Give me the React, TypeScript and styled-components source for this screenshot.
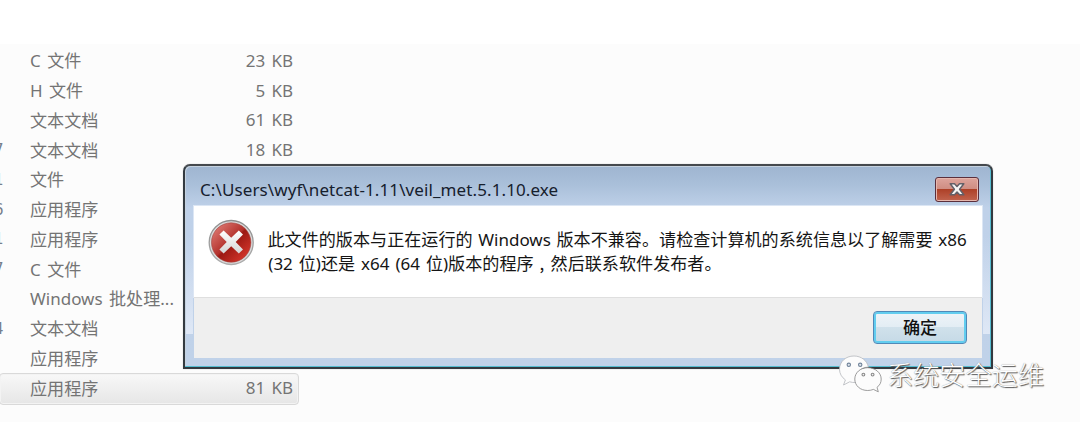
import React from 'react';
import styled, { createGlobalStyle } from 'styled-components';

const GlobalStyle = createGlobalStyle`
  * { box-sizing: border-box; }
  body { margin: 0; background: #fff; font-family: "Noto Sans", "Noto Sans CJK SC", sans-serif; }
`;

const Page = styled.main`
  position: relative;
  width: 1080px;
  height: 423px;
  padding-top: 44px;
  overflow: hidden;
  background: #fff;
`;

const FileList = styled.section`
  height: 378px;
  padding-top: 2px;
  background: #fcfcfc;
`;

const FileRow = styled.div<{ $selected?: boolean }>`
  display: grid;
  grid-template-columns: 30px 160px 103px;
  align-items: center;
  width: 300px;
  height: ${(p) => (p.$selected ? 32 : 29.75)}px;
  margin-left: -1px;
  padding-left: ${(p) => (p.$selected ? 0 : 1)}px;
  padding-bottom: ${(p) => (p.$selected ? 2 : 0)}px;
  font-size: 17px;
  line-height: 24px;
  word-spacing: 1.8px;
  color: #747474;
  white-space: nowrap;
  border: ${(p) => (p.$selected ? '1px solid #d9d9d9' : '0 solid transparent')};
  border-radius: 4px;
  background: ${(p) => (p.$selected ? 'linear-gradient(#f8f8f8, #e6e6e6)' : 'none')};
  box-shadow: ${(p) => (p.$selected ? 'inset 0 0 0 1px #f3f3f3' : 'none')};
`;

const DateCell = styled.span`
  display: flex;
  justify-content: flex-end;
  justify-self: start;
  width: 3.5px;
  height: 24px;
  overflow: hidden;
  font-family: "DejaVu Sans", sans-serif;
  font-size: 15px;
  color: #777f8c;
`;

const Cell = styled.span<{ $end?: boolean }>`
  text-align: ${(p) => (p.$end ? 'right' : 'left')};
`;

const Han = styled.span`
  font-family: "Noto Sans CJK SC", sans-serif;
  font-size: 17.1px;
`;

const Latin = styled.span<{ $gap?: number }>`
  font-size: 17px;
  word-spacing: ${(p) => p.$gap ?? 1.2}px;
`;

const Dialog = styled.section`
  position: absolute;
  left: 183px;
  top: 164px;
  width: 810px;
  height: 205px;
  padding: 1px 9px 9px 9px;
  display: flex;
  flex-direction: column;
  border: 2px solid #333a40;
  border-top-color: #45494e;
  border-radius: 7px 7px 0 0;
  background: linear-gradient(#9fb5d0 0, #a9bfd9 18px, #bfd1e9 42px, #c0d2e9 100%);
  box-shadow: inset -1px -1px 0 #55bcd0, inset 1px 1px 0 #c5d2df, 0 0 1px #999;
`;

const SideGlow = styled.i<{ $right?: boolean }>`
  position: absolute;
  ${(p) => (p.$right ? 'right: 1px;' : 'left: 1px;')}
  top: 70px;
  width: 7px;
  height: 98px;
  background: linear-gradient(#dfe8f600, #dfe8f6);
`;

const TitleBar = styled.header`
  display: flex;
  justify-content: space-between;
  align-items: flex-start;
  height: 39px;
  flex: none;
  padding: 10px 3px 0 6px;
`;

const Title = styled.h1`
  margin: 0;
  font-size: 17px;
  font-weight: 400;
  line-height: 25px;
  letter-spacing: 0.1px;
  color: #16202d;
`;

const CloseButton = styled.button`
  display: grid;
  place-items: center;
  width: 44px;
  height: 25px;
  padding: 0;
  border: 1.5px solid #5b2f3c;
  border-radius: 3px;
  background: linear-gradient(#dda49c 0, #cf8d82 48%, #ae4128 50%, #c1644f 100%);
  box-shadow: inset 0 0 0 1px #e6b7ae;
`;

const Body = styled.div`
  display: flex;
  align-items: flex-start;
  height: 91px;
  flex: none;
  padding: 13px 0 0 14px;
  background: #fff;
  box-shadow: 0 0 0 1px #dce6f4;
`;

const Message = styled.div`
  margin: 8px 0 0 12.5px;
  color: #151515;
  font-size: 16px;
`;

const Line = styled.p<{ $indent?: number }>`
  margin: 0;
  padding-left: ${(p) => p.$indent ?? 0}px;
  height: 24px;
  line-height: 24px;
  white-space: nowrap;
`;

const Comma = styled.span`
  display: inline-block;
  width: 17px;
  padding-left: 6px;
`;

const Footer = styled.footer`
  display: flex;
  justify-content: flex-end;
  align-items: flex-start;
  flex: 1;
  padding: 13px 15px 0;
  border-top: 1px solid #dfdfdf;
  background: #efefef;
`;

const OkButton = styled.button`
  width: 94px;
  height: 33px;
  padding: 1px 0 0;
  border: 1.5px solid #5089b8;
  border-radius: 4px;
  background: linear-gradient(#eff4f8 0, #e3edf4 48%, #d0e1eb 50%, #c5d9e6 100%);
  box-shadow: inset 0 0 0 2px #62cdef;
  color: #111;
  font-weight: 500;
  line-height: 28px;
`;

const Watermark = styled.div`
  position: absolute;
  left: 838px;
  top: 354px;
  display: flex;
  align-items: flex-start;
  gap: 4px;
`;

const WatermarkText = styled.span`
  margin-top: 2px;
  font-family: "Noto Sans CJK SC", sans-serif;
  font-size: 26.2px;
  font-weight: 300;
  line-height: 36px;
  color: #fff;
  white-space: nowrap;
  text-shadow: 1px 1px 1px #555, 0 0 1px #888;
`;

const ErrorIcon = () => (
  <svg width="47" height="47" viewBox="0 0 47 47">
    <defs>
      <linearGradient id="rim" x1="0" y1="0" x2="0" y2="1">
        <stop offset="0" stopColor="#8e8e8e" />
        <stop offset="1" stopColor="#adadad" />
      </linearGradient>
      <linearGradient id="red" x1="0" y1="0" x2="1" y2="1">
        <stop offset="0.1" stopColor="#dc7770" />
        <stop offset="0.48" stopColor="#b3312c" />
        <stop offset="0.52" stopColor="#9b1913" />
        <stop offset="0.85" stopColor="#cf3329" />
      </linearGradient>
      <linearGradient id="cross" x1="0" y1="0" x2="0" y2="1">
        <stop offset="0" stopColor="#fff" />
        <stop offset="1" stopColor="#d5d5d5" />
      </linearGradient>
    </defs>
    <circle cx="23.2" cy="23.5" r="22" fill="#dcdcdc" stroke="url(#rim)" strokeWidth="1.3" />
    <circle cx="23.2" cy="23.5" r="19.7" fill="url(#red)" stroke="#a13e3a" strokeWidth="0.6" />
    <path
      d="M15.6 11.6L23.2 18.7L30.8 11.6L35 15.6L27.7 23L35 30.5L30.8 34.6L23.2 27.3L15.6 34.6L11.4 30.5L18.7 23L11.4 15.6Z"
      fill="url(#cross)"
    />
  </svg>
);

const CloseIcon = () => (
  <svg width="18" height="15" viewBox="0 0 18 15">
    <path
      d="M2.2 1.8H6.5L9 4.5L11.5 1.8H15.8L11.6 7.2L15.8 12.8H11.5L9 10L6.5 12.8H2.2L6.4 7.2Z"
      fill="#f5f5f5"
      stroke="#646068"
      strokeWidth="1.5"
      strokeLinejoin="round"
    />
  </svg>
);

const ChatLogo = () => (
  <svg width="45" height="40" viewBox="0 0 45 40">
    <g fill="#fcfcfc" stroke="#858585" strokeWidth="0.8">
      <path d="M16 2C7.5 2 1.5 7.8 1.5 15.2C1.5 19.6 3.7 23.3 7.4 25.9L5.5 31L11.7 27.8C13.6 28.4 15.5 28.6 17.5 28.5C16 20 22 13.3 30.4 13C29 6.5 23.2 2 16 2Z" stroke="#b5b8bd" />
      <path d="M29.7 13.7C22.2 13.7 16.8 18.8 16.8 25.1C16.8 31.7 22.3 36.5 29.7 36.5C31.8 36.5 33.7 36.1 35.4 35.4L40.3 37.8L39 33.3C41.9 31.3 43.2 28.4 43.2 25.1C43.2 18.8 37.3 13.7 29.7 13.7Z" />
    </g>
    <g fill="#dfe5ec" stroke="#71849a" strokeWidth="1.1">
      <circle cx="10.8" cy="10.8" r="1.7" />
      <circle cx="22.2" cy="10.8" r="1.7" />
      <circle cx="25.4" cy="20.6" r="1.4" fill="#f2f2f2" stroke="#888" />
      <circle cx="34.6" cy="20.6" r="1.4" fill="#f2f2f2" stroke="#888" />
    </g>
  </svg>
);

type FileEntry = { date?: string; latin?: string; han: string; more?: boolean; size?: string; selected?: boolean };

const files: FileEntry[] = [
  { latin: 'C', han: '文件', size: '23 KB' },
  { latin: 'H', han: '文件', size: '5 KB' },
  { han: '文本文档', size: '61 KB' },
  { date: '7', han: '文本文档', size: '18 KB' },
  { date: '1', han: '文件' },
  { date: '6', han: '应用程序' },
  { date: '1', han: '应用程序' },
  { date: '7', latin: 'C', han: '文件' },
  { latin: 'Windows', han: '批处理', more: true },
  { date: '4', han: '文本文档' },
  { han: '应用程序' },
  { han: '应用程序', size: '81 KB', selected: true },
];

export default function App() {
  return (
    <Page>
      <GlobalStyle />
      <FileList>
        {files.map((file, i) => (
          <FileRow key={i} $selected={file.selected}>
            <DateCell>{file.date}</DateCell>
            <Cell>
              {file.latin && <Latin $gap={2}>{file.latin} </Latin>}
              <Han>{file.han}</Han>
              {file.more && '...'}
            </Cell>
            <Cell $end>{file.size}</Cell>
          </FileRow>
        ))}
      </FileList>

      <Dialog>
        <SideGlow />
        <SideGlow $right />
        <TitleBar>
          <Title>C:\Users\wyf\netcat-1.11\veil_met.5.1.10.exe</Title>
          <CloseButton aria-label="关闭"><CloseIcon /></CloseButton>
        </TitleBar>
        <Body>
          <ErrorIcon />
          <Message>
            <Line>
              <Han>此文件的版本与正在运行的</Han>
              <Latin> Windows </Latin>
              <Han>版本不兼容。请检查计算机的系统信息以了解需要</Han>
              <Latin> x86</Latin>
            </Line>
            <Line $indent={0.8}>
              <Latin $gap={1.5}>(32 </Latin>
              <Han>位</Han>
              <Latin>)</Latin>
              <Han>还是</Han>
              <Latin $gap={1.5}> x64 (64 </Latin>
              <Han>位</Han>
              <Latin>)</Latin>
              <Han>版本的程序<Comma>,</Comma>然后联系软件发布者。</Han>
            </Line>
          </Message>
        </Body>
        <Footer>
          <OkButton><Han>确定</Han></OkButton>
        </Footer>
      </Dialog>

      <Watermark>
        <ChatLogo />
        <WatermarkText>系统安全运维</WatermarkText>
      </Watermark>
    </Page>
  );
}
